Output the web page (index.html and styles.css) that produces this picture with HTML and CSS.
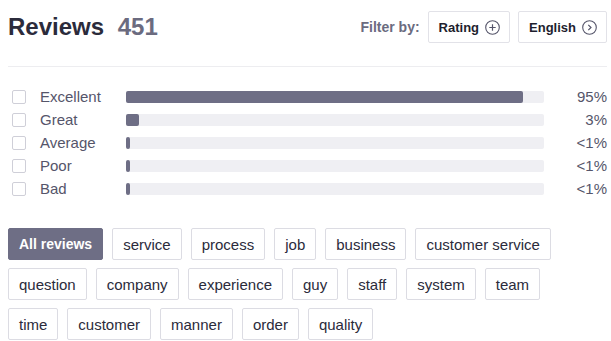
FILE: index.html
```html
<!DOCTYPE html>
<html lang="en">
<head>
    <meta charset="UTF-8">
    <meta name="viewport" content="width=device-width, initial-scale=1.0">
    <title>Reviews</title>
    <link rel="stylesheet" href="styles.css">
</head>
<body>
    <div class="reviews">
        <div class="reviews-header">
            <h1 class="reviews-title">Reviews <span class="reviews-count">451</span></h1>
            <div class="filters">
                <span class="filter-label">Filter by:</span>
                <button class="filter-btn">Rating
                    <svg class="filter-icon" width="15" height="15" viewBox="0 0 15 15">
                        <circle cx="7.5" cy="7.5" r="6.8" fill="none" stroke="#55556a" stroke-width="1.1"/>
                        <path d="M7.5 4.3v6.4M4.3 7.5h6.4" stroke="#55556a" stroke-width="1.2"/>
                    </svg>
                </button>
                <button class="filter-btn">English
                    <svg class="filter-icon" width="15" height="15" viewBox="0 0 15 15">
                        <circle cx="7.5" cy="7.5" r="6.8" fill="none" stroke="#55556a" stroke-width="1.1"/>
                        <path d="M6.3 4.8l2.7 2.7-2.7 2.7" fill="none" stroke="#55556a" stroke-width="1.2"/>
                    </svg>
                </button>
            </div>
        </div>
        <div class="divider"></div>

        <ul class="ratings">
            <li class="rating-row">
                <span class="checkbox"></span>
                <span class="rating-label">Excellent</span>
                <span class="bar"><span class="bar-fill" style="width: 95%"></span></span>
                <span class="rating-pct">95%</span>
            </li>
            <li class="rating-row">
                <span class="checkbox"></span>
                <span class="rating-label">Great</span>
                <span class="bar"><span class="bar-fill" style="width: 3%"></span></span>
                <span class="rating-pct">3%</span>
            </li>
            <li class="rating-row">
                <span class="checkbox"></span>
                <span class="rating-label">Average</span>
                <span class="bar"><span class="bar-fill" style="width: 4px"></span></span>
                <span class="rating-pct">&lt;1%</span>
            </li>
            <li class="rating-row">
                <span class="checkbox"></span>
                <span class="rating-label">Poor</span>
                <span class="bar"><span class="bar-fill" style="width: 4px"></span></span>
                <span class="rating-pct">&lt;1%</span>
            </li>
            <li class="rating-row">
                <span class="checkbox"></span>
                <span class="rating-label">Bad</span>
                <span class="bar"><span class="bar-fill" style="width: 4px"></span></span>
                <span class="rating-pct">&lt;1%</span>
            </li>
        </ul>

        <div class="tags">
            <button class="tag tag-active">All reviews</button>
            <button class="tag">service</button>
            <button class="tag">process</button>
            <button class="tag">job</button>
            <button class="tag">business</button>
            <button class="tag">customer service</button>
            <button class="tag">question</button>
            <button class="tag">company</button>
            <button class="tag">experience</button>
            <button class="tag">guy</button>
            <button class="tag">staff</button>
            <button class="tag">system</button>
            <button class="tag">team</button>
            <button class="tag">time</button>
            <button class="tag">customer</button>
            <button class="tag">manner</button>
            <button class="tag">order</button>
            <button class="tag">quality</button>
        </div>
    </div>
</body>
</html>
```

FILE: styles.css
```css
body {
    margin: 0;
    font-family: "Liberation Sans", Arial, sans-serif;
    color: #2b2b3b;
    background: #fff;
}
.reviews {
    width: 599px;
    padding: 11px 0 0 8px;
}
.reviews-header {
    display: flex;
    align-items: center;
    justify-content: space-between;
    height: 32px;
}
.reviews-title {
    margin: 0;
    font-size: 24px;
    font-weight: bold;
    color: #2b2b3b;
}
.reviews-count {
    margin-left: 7px;
    color: #6b6b7f;
}
.filters {
    display: flex;
    align-items: center;
}
.filter-label {
    font-size: 14px;
    font-weight: bold;
    color: #6b6b7f;
    margin-right: 8px;
}
.filter-btn {
    display: flex;
    align-items: center;
    height: 32px;
    margin-left: 8px;
    padding: 0 9px 0 10px;
    border: 1px solid #e2e2e8;
    border-radius: 2px;
    background: #fff;
    font-family: inherit;
    font-size: 13px;
    font-weight: bold;
    color: #1e1e2e;
}
.filter-label + .filter-btn {
    margin-left: 0;
}
.filter-icon {
    margin-left: 6px;
}
.divider {
    height: 1px;
    margin-top: 23px;
    background: #ededf0;
}
.ratings {
    list-style: none;
    margin: 18px 0 0;
    padding: 0;
}
.rating-row {
    display: flex;
    align-items: center;
    height: 23px;
    font-size: 15px;
    color: #55556a;
}
.checkbox {
    width: 12px;
    height: 12px;
    margin: 0 14px 0 4px;
    border: 1px solid #cfcfd8;
    border-radius: 2px;
}
.rating-label {
    width: 86px;
}
.bar {
    width: 418px;
    height: 12px;
    background: #efeff3;
    border-radius: 2px;
}
.bar-fill {
    display: block;
    height: 100%;
    background: #6e6e85;
    border-radius: 2px;
}
.rating-pct {
    flex: 1;
    text-align: right;
}
.tags {
    display: flex;
    flex-wrap: wrap;
    gap: 8px 9px;
    max-width: 570px;
    margin-top: 28px;
}
.tag {
    height: 32px;
    padding: 0 10px;
    border: 1px solid #dcdce3;
    border-radius: 2px;
    background: #fff;
    font-family: inherit;
    font-size: 15px;
    color: #2b2b3b;
}
.tag-active {
    background: #6e6e85;
    border-color: #6e6e85;
    color: #fff;
    font-size: 14px;
    font-weight: bold;
}
```
